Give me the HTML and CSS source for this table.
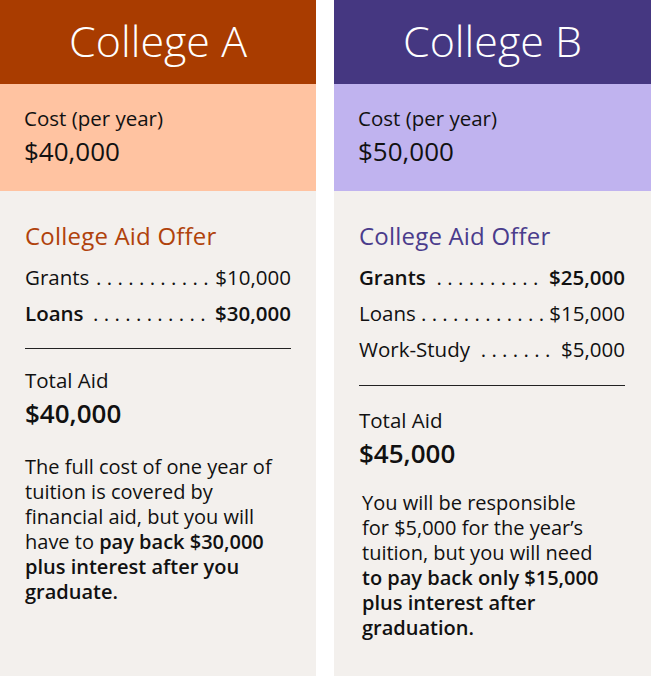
FILE: index.html
```html
<!DOCTYPE html>
<html lang="en">
<head>
  <meta charset="UTF-8" />
  <meta name="viewport" content="width=device-width, initial-scale=1.0" />
  <title>College Aid Offers</title>
  <link rel="stylesheet" href="styles.css">
</head>
<body>
  <div class="compare">
    <div class="college college-a">
      <div class="head">College A</div>
      <div class="cost">
        <div class="cost-label">Cost (per year)</div>
        <div class="cost-value">$40,000</div>
      </div>
      <div class="offer">
        <div class="offer-title">College Aid Offer</div>
        <div class="row"><span>Grants</span><span class="dots">. . . . . . . . . . .</span><span>$10,000</span></div>
        <div class="row bold"><span>Loans</span><span class="dots">. . . . . . . . . . .</span><span>$30,000</span></div>
        <div class="total">
          <div class="total-label">Total Aid</div>
          <div class="total-value">$40,000</div>
        </div>
        <p class="note">The full cost of one year of tuition is covered by financial aid, but you will have to <b>pay back $30,000 plus interest after you graduate.</b></p>
      </div>
    </div>
    <div class="college college-b">
      <div class="head">College B</div>
      <div class="cost">
        <div class="cost-label">Cost (per year)</div>
        <div class="cost-value">$50,000</div>
      </div>
      <div class="offer">
        <div class="offer-title">College Aid Offer</div>
        <div class="row bold"><span>Grants</span><span class="dots">. . . . . . . . . .</span><span>$25,000</span></div>
        <div class="row"><span>Loans</span><span class="dots">. . . . . . . . . . . .</span><span>$15,000</span></div>
        <div class="row"><span>Work-Study</span><span class="dots">. . . . . . .</span><span>$5,000</span></div>
        <div class="total">
          <div class="total-label">Total Aid</div>
          <div class="total-value">$45,000</div>
        </div>
        <p class="note">You will be responsible<br>for $5,000 for the year’s tuition, but you will need <b>to pay back only $15,000 plus interest after graduation.</b></p>
      </div>
    </div>
  </div>
</body>
</html>
```

FILE: styles.css
```css
body {
  margin: 0;
  font-family: 'Open Sans', 'Noto Sans', sans-serif;
  color: #111;
  background: #fff;
}
.compare {
  display: flex;
  gap: 18px;
  height: 676px;
}
.college {
  width: 316px;
  background: #f3f0ed;
  display: flex;
  flex-direction: column;
}
.college-b {
  width: 317px;
}
.head {
  height: 84px;
  display: flex;
  align-items: center;
  justify-content: center;
  color: #fff;
  font-size: 43px;
  font-weight: 300;
  padding-bottom: 3px;
  box-sizing: border-box;
}
.college-a .head { background: #a93c00; }
.college-b .head { background: #453781; }
.cost {
  height: 107px;
  padding: 22px 24px 0;
  box-sizing: border-box;
}
.college-a .cost { background: #ffc3a1; }
.college-b .cost { background: #c0b3ef; }
.cost-label {
  font-size: 20.5px;
  line-height: 25px;
}
.cost-value {
  font-size: 26px;
  line-height: 30px;
  margin-top: 5px;
}
.offer {
  padding: 30px 25px 0;
}
.college-b .offer {
  padding-right: 26px;
}
.offer-title {
  font-size: 24px;
  line-height: 30px;
  letter-spacing: 0.2px;
  margin-bottom: 8px;
}
.college-a .offer-title { color: #b0420b; }
.college-b .offer-title { color: #4a3c8c; }
.row {
  display: flex;
  justify-content: space-between;
  font-size: 20.5px;
  line-height: 36px;
  white-space: nowrap;
}
.row.bold {
  font-weight: 600;
}
.dots {
  font-weight: 400;
  padding: 0 4px;
}
.total {
  border-top: 1px solid #222;
  margin-top: 17px;
  padding-top: 19px;
}
.college-b .total {
  margin-top: 18px;
  padding-top: 22px;
}
.total-label {
  font-size: 20.5px;
  line-height: 24px;
}
.total-value {
  font-size: 26px;
  line-height: 30px;
  font-weight: 600;
  margin-top: 6px;
}
.note {
  font-size: 20px;
  line-height: 25px;
  margin: 26px 0 0;
}
.note b {
  font-weight: 600;
}
.college-b .note {
  margin-top: 22px;
  padding-left: 3px;
  max-width: 252px;
}
```
